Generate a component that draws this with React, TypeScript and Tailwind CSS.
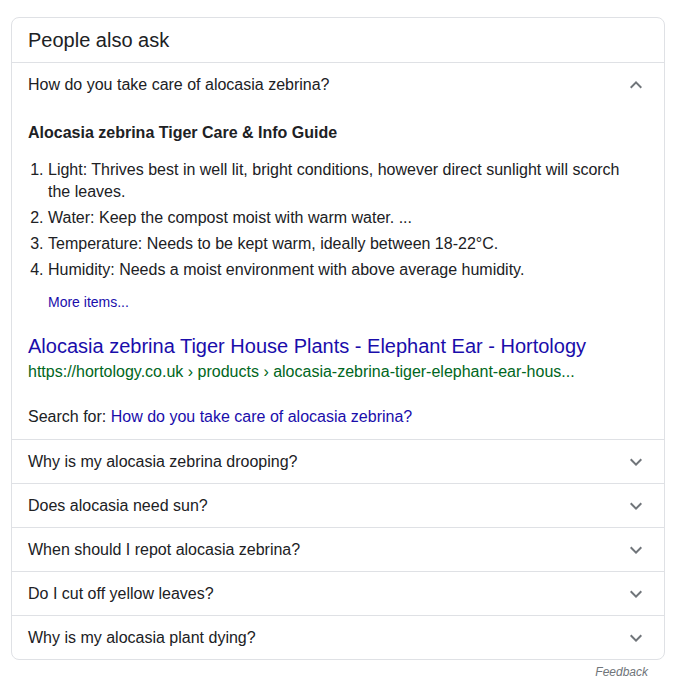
import React from "react";

const questions = [
  "Why is my alocasia zebrina drooping?",
  "Does alocasia need sun?",
  "When should I repot alocasia zebrina?",
  "Do I cut off yellow leaves?",
  "Why is my alocasia plant dying?",
];

const steps = [
  "Light: Thrives best in well lit, bright conditions, however direct sunlight will scorch the leaves.",
  "Water: Keep the compost moist with warm water. ...",
  "Temperature: Needs to be kept warm, ideally between 18-22°C.",
  "Humidity: Needs a moist environment with above average humidity.",
];

function Chevron({ up }: { up?: boolean }) {
  return (
    <svg width="24" height="24" viewBox="0 0 24 24" className="shrink-0 fill-[#70757a]">
      {up ? (
        <path d="M12 8l-6 6 1.41 1.41L12 10.83l4.59 4.58L18 14z" />
      ) : (
        <path d="M7.41 8.59L12 13.17l4.59-4.58L18 10l-6 6-6-6 1.41-1.41z" />
      )}
    </svg>
  );
}

export default function App() {
  return (
    <div className="min-h-screen bg-white pt-[17px] pl-[11px] font-['Liberation_Sans',Arial,sans-serif] text-[#202124]">
      <div className="w-[654px]">
        <div className="rounded-lg border border-[#dfe1e5] bg-white">
          {/* Header */}
          <div className="flex h-[45px] items-center border-b border-[#dfe1e5] px-4 text-[20px] leading-[26px]">
            People also ask
          </div>

          {/* Expanded question */}
          <div className="flex h-[44px] items-center justify-between px-4 text-base">
            <span>How do you take care of alocasia zebrina?</span>
            <Chevron up />
          </div>
          <div className="border-b border-[#dfe1e5] px-4 pt-[15px] pb-[11px]">
            <div className="text-base font-bold leading-[22px]">Alocasia zebrina Tiger Care &amp; Info Guide</div>
            <ol className="mt-[15px] list-decimal pl-5 pr-[20px] text-base leading-[22px]">
              {steps.map((s, i) => (
                <li key={i} className={i > 0 ? "mt-[4px]" : ""}>
                  {s}
                </li>
              ))}
            </ol>
            <div className="mt-[11px] pl-5 text-sm leading-5 text-[#1a0dab]">More items...</div>
            <div className="mt-[21px] text-[20px] leading-[26px] text-[#1a0dab]">
              Alocasia zebrina Tiger House Plants - Elephant Ear - Hortology
            </div>
            <div className="mt-[2px] text-base leading-[22px] text-[#006621]">
              https://hortology.co.uk › products › alocasia-zebrina-tiger-elephant-ear-hous...
            </div>
            <div className="mt-[23px] text-base leading-[22px]">
              Search for: <span className="text-[#1a0dab]">How do you take care of alocasia zebrina?</span>
            </div>
          </div>

          {/* Collapsed questions */}
          {questions.map((q, i) => (
            <div
              key={q}
              className={
                "flex items-center justify-between px-4 text-base " +
                (i < questions.length - 1 ? "h-[44px] border-b border-[#dfe1e5]" : "h-[43px]")
              }
            >
              <span>{q}</span>
              <Chevron />
            </div>
          ))}
        </div>
        <div className="mt-[4px] pr-[17px] text-right text-xs italic leading-4 text-[#70757a]">Feedback</div>
      </div>
    </div>
  );
}
